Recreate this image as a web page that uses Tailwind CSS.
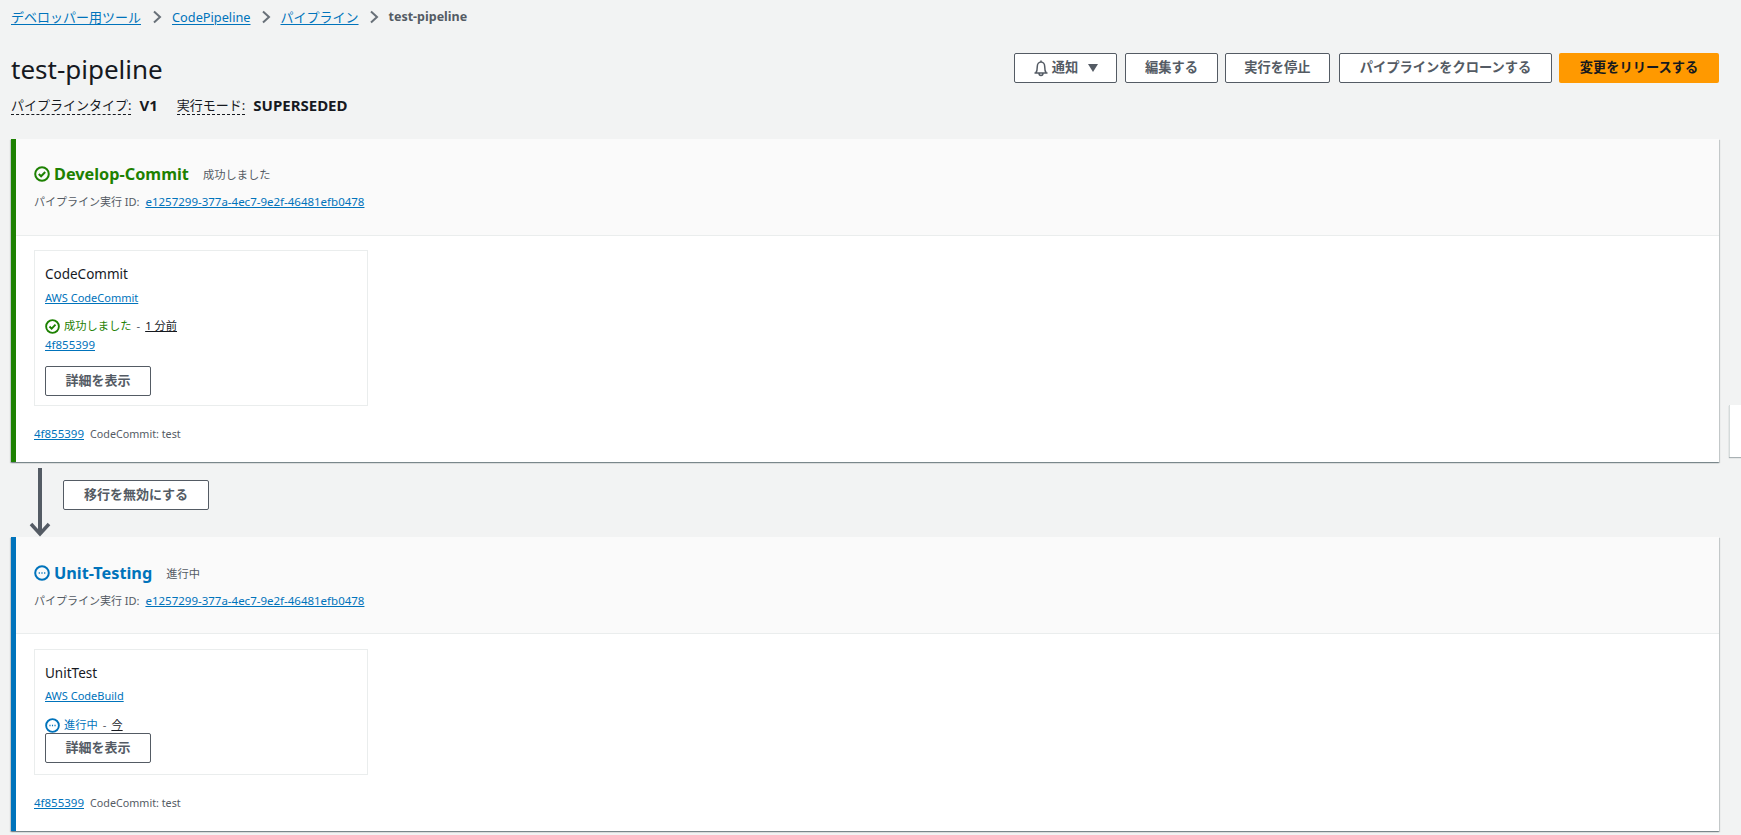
<!DOCTYPE html>
<html lang="ja">
<head>
<meta charset="utf-8">
<script src="https://cdn.jsdelivr.net/npm/@tailwindcss/browser@4"></script>
</head>
<body class="w-[1741px] h-[835px] overflow-hidden bg-[#f2f3f3] text-[#16191f] font-['Noto_Sans','Noto_Sans_CJK_JP',sans-serif]">
<div class="relative h-[835px] overflow-hidden">
  <nav class="flex items-center h-[34px] pl-[11px] text-[13px] leading-[34px]">
    <a class="text-[#0073bb] underline underline-offset-2">デベロッパー用ツール</a>
    <svg class="ml-[11px] mr-[10px]" width="10" height="14" viewBox="0 0 10 14" fill="none" stroke="#687078" stroke-width="2"><path d="M2 1.5 8 7l-6 5.5"/></svg>
    <a class="text-[#0073bb] underline underline-offset-2 text-[12.750px]">CodePipeline</a>
    <svg class="mx-[10px]" width="10" height="14" viewBox="0 0 10 14" fill="none" stroke="#687078" stroke-width="2"><path d="M2 1.5 8 7l-6 5.5"/></svg>
    <a class="text-[#0073bb] underline underline-offset-2">パイプライン</a>
    <svg class="mx-[10px]" width="10" height="14" viewBox="0 0 10 14" fill="none" stroke="#687078" stroke-width="2"><path d="M2 1.5 8 7l-6 5.5"/></svg>
    <span class="text-[#545b64] font-bold text-[12.500px]">test-pipeline</span>
  </nav>

  <div class="flex justify-between items-start h-[105px] pl-[11px] pr-[22px]">
    <div>
      <h1 class="text-[26px] leading-[32px] font-normal mt-[19px]">test-pipeline</h1>
      <div class="flex items-center mt-[10px] text-[13px] leading-[20px]">
        <span class="border-b border-dashed border-[#16191f] leading-[18px]">パイプラインタイプ:</span>
        <b class="ml-[8px] text-[15px]">V1</b>
        <span class="ml-[19px] border-b border-dashed border-[#16191f] leading-[18px]">実行モード:</span>
        <b class="ml-[8px] text-[15px]">SUPERSEDED</b>
      </div>
    </div>
    <div class="flex mt-[19px] text-[13.250px] font-semibold text-[#545b64]">
      <button class="flex items-center justify-center w-[103px] h-[30px] bg-white border border-[#545b64] rounded-[2px]">
        <svg width="16" height="18" viewBox="0 0 16 18" fill="none" stroke="#545b64" stroke-width="1.500"><path d="M1.500 14h13M2.800 14c1.200-1.500 1.500-3.500 1.500-6.500C4.300 5 6 3 8 3s3.700 2 3.700 4.500c0 3 .3 5 1.500 6.500M8 3V1.500M6 14c0 1.500.8 2.500 2 2.500s2-1 2-2.500"/></svg>
        <span class="ml-[3px]">通知</span>
        <svg class="ml-[10px]" width="10" height="8" viewBox="0 0 10 8" fill="#545b64"><path d="M0 0h10L5 8z"/></svg>
      </button>
      <button class="ml-[8px] w-[93px] h-[30px] bg-white border border-[#545b64] rounded-[2px]">編集する</button>
      <button class="ml-[7px] w-[105px] h-[30px] bg-white border border-[#545b64] rounded-[2px]">実行を停止</button>
      <button class="ml-[9px] w-[213px] h-[30px] bg-white border border-[#545b64] rounded-[2px]">パイプラインをクローンする</button>
      <button class="ml-[7px] w-[160px] h-[30px] bg-[#ff9900] rounded-[2px] text-[#16191f]">変更をリリースする</button>
    </div>
  </div>

  <section class="ml-[11px] w-[1708px] h-[323px] bg-white border-l-[5px] border-[#1d8102] shadow-[0_1px_1px_0_rgba(0,28,36,0.3),1px_1px_1px_0_rgba(0,28,36,0.15),-1px_1px_1px_0_rgba(0,28,36,0.15)]">
    <header class="h-[97px] bg-[#fafafa] border-b border-[#eaeded] pl-[18px] pt-[22px]">
      <div class="flex items-center h-[26px]">
        <svg width="16" height="16" viewBox="0 0 16 16" fill="none" stroke="#1d8102" stroke-width="2"><circle cx="8" cy="8" r="6.800"/><path d="m4.800 8 2.300 2.300 4.100-4.300"/></svg>
        <h2 class="ml-[4px] text-[16.250px] leading-[26px] font-bold text-[#1d8102]">Develop-Commit</h2>
        <span class="ml-[14px] mt-[2px] text-[11.250px] text-[#545b64]">成功しました</span>
      </div>
      <div class="mt-[7px] text-[11px] leading-[16px] text-[#545b64]">パイプライン実行 ID: <a class="ml-[3px] text-[11.500px] text-[#0073bb] underline">e1257299-377a-4ec7-9e2f-46481efb0478</a></div>
    </header>
    <div class="pl-[18px] pt-[14px]">
      <div class="w-[334px] h-[156px] border border-[#eaeded] px-[10px] pt-[13px]">
        <div class="text-[13.500px] leading-[20px] text-[#16191f]">CodeCommit</div>
        <a class="block mt-[6px] text-[11px] leading-[16px] text-[#0073bb] underline">AWS CodeCommit</a>
        <div class="flex items-center mt-[12px] h-[16px] text-[11.250px] text-[#1d8102]">
          <svg width="15" height="15" viewBox="0 0 16 16" fill="none" stroke="#1d8102" stroke-width="2"><circle cx="8" cy="8" r="6.800"/><path d="m4.800 8 2.300 2.300 4.100-4.300"/></svg>
          <span class="ml-[4px]">成功しました</span><span class="ml-[5px] text-[#545b64]">-</span><span class="ml-[5px] text-[#16191f] underline">1 分前</span>
        </div>
        <a class="block mt-[3px] text-[11.500px] leading-[16px] text-[#0073bb] underline">4f855399</a>
        <button class="block mt-[13px] w-[106px] h-[30px] bg-white border border-[#545b64] rounded-[2px] text-[13px] font-semibold text-[#545b64]">詳細を表示</button>
      </div>
      <div class="mt-[20px] flex text-[10.750px] leading-[16px] text-[#545b64]"><a class="text-[11.500px] text-[#0073bb] underline">4f855399</a><span class="ml-[6px]">CodeCommit: test</span></div>
    </div>
  </section>

  <div class="relative h-[75px] ml-[11px]">
    <svg class="absolute left-[18px] top-[5px]" width="22" height="70" viewBox="0 0 22 70" fill="none" stroke="#545b64" stroke-width="4"><path d="M11 1v66"/><path d="m2 57 9 10 9-10" stroke-width="3.500"/></svg>
    <button class="absolute left-[52px] top-[18px] w-[146px] h-[30px] bg-white border border-[#545b64] rounded-[2px] text-[13px] font-semibold text-[#545b64]">移行を無効にする</button>
  </div>

  <section class="ml-[11px] w-[1708px] h-[294px] bg-white border-l-[5px] border-[#0073bb] shadow-[0_1px_1px_0_rgba(0,28,36,0.3),1px_1px_1px_0_rgba(0,28,36,0.15),-1px_1px_1px_0_rgba(0,28,36,0.15)]">
    <header class="h-[97px] bg-[#fafafa] border-b border-[#eaeded] pl-[18px] pt-[23px]">
      <div class="flex items-center h-[26px]">
        <svg width="16" height="16" viewBox="0 0 16 16" fill="none" stroke="#0073bb" stroke-width="2"><circle cx="8" cy="8" r="6.800"/><path d="M4.700 8h1.200M7.400 8h1.200M10.100 8h1.200" stroke-width="1.500"/></svg>
        <h2 class="ml-[4px] text-[16.250px] leading-[26px] font-bold text-[#0073bb]">Unit-Testing</h2>
        <span class="ml-[14px] mt-[2px] text-[11.250px] text-[#545b64]">進行中</span>
      </div>
      <div class="mt-[7px] text-[11px] leading-[16px] text-[#545b64]">パイプライン実行 ID: <a class="ml-[3px] text-[11.500px] text-[#0073bb] underline">e1257299-377a-4ec7-9e2f-46481efb0478</a></div>
    </header>
    <div class="pl-[18px] pt-[15px]">
      <div class="w-[334px] h-[126px] border border-[#eaeded] px-[10px] pt-[13px]">
        <div class="text-[13.500px] leading-[20px] text-[#16191f]">UnitTest</div>
        <a class="block mt-[5px] text-[11px] leading-[16px] text-[#0073bb] underline">AWS CodeBuild</a>
        <div class="flex items-center mt-[13px] h-[16px] text-[11.250px] text-[#0073bb]">
          <svg width="15" height="15" viewBox="0 0 16 16" fill="none" stroke="#0073bb" stroke-width="2"><circle cx="8" cy="8" r="6.800"/><path d="M4.700 8h1.200M7.400 8h1.200M10.100 8h1.200" stroke-width="1.500"/></svg>
          <span class="ml-[4px]">進行中</span><span class="ml-[5px] text-[#545b64]">-</span><span class="ml-[5px] text-[#16191f] underline">今</span>
        </div>
        <button class="block w-[106px] h-[30px] bg-white border border-[#545b64] rounded-[2px] text-[13px] font-semibold text-[#545b64]">詳細を表示</button>
      </div>
      <div class="mt-[20px] flex text-[10.750px] leading-[16px] text-[#545b64]"><a class="text-[11.500px] text-[#0073bb] underline">4f855399</a><span class="ml-[6px]">CodeCommit: test</span></div>
    </div>
  </section>

  <div class="absolute right-0 top-[405px] w-[12px] h-[52px] bg-white border-l border-[#d5dbdb] shadow-[0_1px_1px_0_rgba(0,28,36,0.3)]"></div>
</div>
</body>
</html>
